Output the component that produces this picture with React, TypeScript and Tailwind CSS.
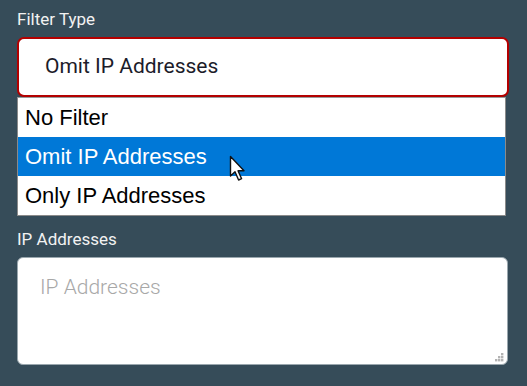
const options = ['No Filter', 'Omit IP Addresses', 'Only IP Addresses']

function Cursor() {
  return (
    <svg width="20" height="28" viewBox="0 0 20 28" className="absolute left-[229px] top-[155px]">
      <path
        d="M1.5 1.5 L1.5 21 L6 16.8 L9.6 25 L12.6 23.7 L9 15.8 L15 15.8 Z"
        fill="#fff"
        stroke="#111"
        strokeWidth="1.4"
        strokeLinejoin="round"
      />
    </svg>
  )
}

function Grip() {
  // dotted resize grip in the textarea corner
  return (
    <svg width="9" height="9" viewBox="0 0 9 9" className="absolute right-[4px] bottom-[3px]">
      <rect x="6" y="0" width="2.4" height="2.4" fill="#b3b3b3" />
      <rect x="3" y="3" width="2.4" height="2.4" fill="#b3b3b3" />
      <rect x="6" y="3" width="2.4" height="2.4" fill="#b3b3b3" />
      <rect x="0" y="6" width="2.4" height="2.4" fill="#b3b3b3" />
      <rect x="3" y="6" width="2.4" height="2.4" fill="#b3b3b3" />
      <rect x="6" y="6" width="2.4" height="2.4" fill="#b3b3b3" />
    </svg>
  )
}

export default function App() {
  const selected = 'Omit IP Addresses'

  return (
    <div className="relative w-[527px] h-[386px] bg-[#364c59] px-[17px] pt-[7px] font-['Roboto',sans-serif] overflow-hidden">
      {/* Filter type */}
      <label className="block text-[17px] leading-[24px] text-[#f2f2f2]">Filter Type</label>
      <div className="mt-[6px] w-[492px] h-[60px] rounded-[7px] border-2 border-[#b30000] bg-white flex items-center pl-[26px] text-[21px] text-[#1c1c2a]">
        {selected}
      </div>

      {/* Open dropdown */}
      <div className="w-[489px] bg-white border border-[#8a8a8a] border-t-[#9a9a9a] font-['Liberation_Sans',Arial,sans-serif] text-[22px] text-black">
        {options.map((opt) => (
          <div
            key={opt}
            className={`h-[39px] flex items-center pl-[7px] ${
              opt === selected ? 'bg-[#0078d7] text-white' : ''
            }`}
          >
            {opt}
          </div>
        ))}
      </div>

      {/* IP addresses */}
      <label className="block mt-[11px] text-[17px] leading-[24px] text-[#f2f2f2]">IP Addresses</label>
      <div className="relative mt-[6px] w-[491px]">
        <textarea
          placeholder="IP Addresses"
          className="block w-[491px] h-[108px] rounded-[6px] border border-[#9aa7ae] bg-white px-[22px] py-[14px] text-[21px] font-light text-[#333] placeholder:text-[#a8a8a8] outline-none resize-none"
        />
        <Grip />
      </div>

      <Cursor />
    </div>
  )
}
